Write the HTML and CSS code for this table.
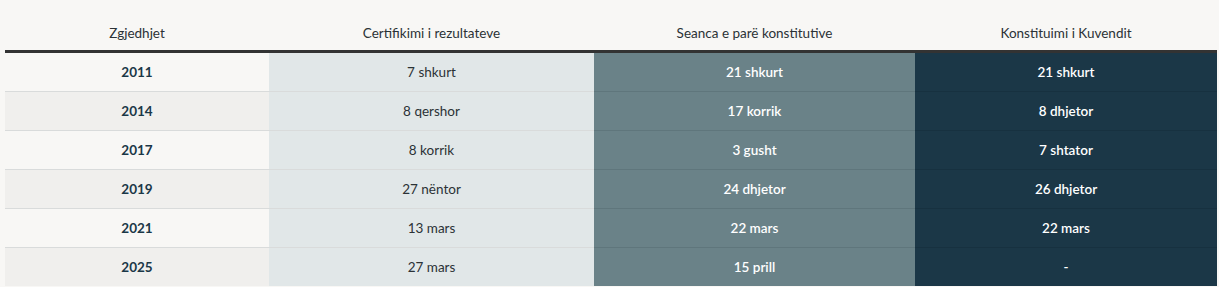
FILE: index.html
```html
<!DOCTYPE html>
<html lang="sq">
<head>
<meta charset="utf-8">
<title>Zgjedhjet</title>
<link rel="stylesheet" href="styles.css">
</head>
<body>
<table class="dates">
  <colgroup>
    <col class="c1"><col class="c2"><col class="c3"><col class="c4">
  </colgroup>
  <thead>
    <tr>
      <th>Zgjedhjet</th>
      <th>Certifikimi i rezultateve</th>
      <th>Seanca e parë konstitutive</th>
      <th>Konstituimi i Kuvendit</th>
    </tr>
  </thead>
  <tbody>
    <tr><td class="year">2011</td><td class="cert">7 shkurt</td><td class="sess">21 shkurt</td><td class="konst">21 shkurt</td></tr>
    <tr><td class="year">2014</td><td class="cert">8 qershor</td><td class="sess">17 korrik</td><td class="konst">8 dhjetor</td></tr>
    <tr><td class="year">2017</td><td class="cert">8 korrik</td><td class="sess">3 gusht</td><td class="konst">7 shtator</td></tr>
    <tr><td class="year">2019</td><td class="cert">27 nëntor</td><td class="sess">24 dhjetor</td><td class="konst">26 dhjetor</td></tr>
    <tr><td class="year">2021</td><td class="cert">13 mars</td><td class="sess">22 mars</td><td class="konst">22 mars</td></tr>
    <tr><td class="year">2025</td><td class="cert">27 mars</td><td class="sess">15 prill</td><td class="konst">-</td></tr>
  </tbody>
</table>
</body>
</html>
```
FILE: styles.css
```css
html, body {
  margin: 0;
  background: #f8f7f5;
}
body {
  padding: 0 2px 0 5px;
  font-family: Lato, "Liberation Sans", sans-serif;
  font-size: 13.5px;
  color: #2b3236;
}
.dates {
  width: 1212px;
  border-collapse: collapse;
  table-layout: fixed;
}
.c1 { width: 264px; }
.c2 { width: 325px; }
.c3 { width: 321px; }
.c4 { width: 302px; }
.dates th {
  height: 51px;
  padding: 16px 0 0;
  box-sizing: border-box;
  font-weight: 400;
  text-align: center;
  color: #2b3236;
  border-bottom: 3px solid #333333;
}
.dates td {
  height: 38px;
  padding: 0;
  text-align: center;
  border-top: 1px solid #d9dbdb;
}
.dates tbody tr:first-child td { border-top: none; }
.year {
  font-weight: 700;
  color: #1b3747;
  background: #f8f7f5;
}
.dates tbody tr:nth-child(even) .year { background: #f0efed; }
.cert { background: #e1e7e8; color: #2b3236; }
.sess {
  background: #6a8288;
  color: #ffffff;
  font-weight: 600;
  border-top-color: #5f767c !important;
}
.konst {
  background: #1b3747;
  color: #ffffff;
  font-weight: 600;
  border-top-color: #173140 !important;
}
```
